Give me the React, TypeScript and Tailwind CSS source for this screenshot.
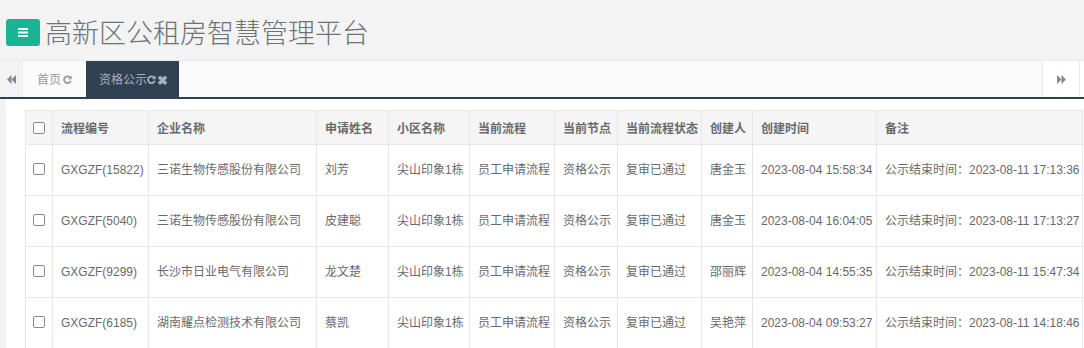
import React from "react";

const FONT = '"Liberation Sans", Arial, "Noto Sans CJK SC", sans-serif';

const rows = [
  ["GXGZF(15822)", "三诺生物传感股份有限公司", "刘芳", "尖山印象1栋", "员工申请流程", "资格公示", "复审已通过", "唐金玉", "2023-08-04 15:58:34", "公示结束时间：2023-08-11 17:13:36"],
  ["GXGZF(5040)", "三诺生物传感股份有限公司", "皮建聪", "尖山印象1栋", "员工申请流程", "资格公示", "复审已通过", "唐金玉", "2023-08-04 16:04:05", "公示结束时间：2023-08-11 17:13:27"],
  ["GXGZF(9299)", "长沙市日业电气有限公司", "龙文楚", "尖山印象1栋", "员工申请流程", "资格公示", "复审已通过", "邵丽辉", "2023-08-04 14:55:35", "公示结束时间：2023-08-11 15:47:34"],
  ["GXGZF(6185)", "湖南耀点检测技术有限公司", "蔡凯", "尖山印象1栋", "员工申请流程", "资格公示", "复审已通过", "吴艳萍", "2023-08-04 09:53:27", "公示结束时间：2023-08-11 14:18:46"],
];

const headers = ["流程编号", "企业名称", "申请姓名", "小区名称", "当前流程", "当前节点", "当前流程状态", "创建人", "创建时间", "备注"];
const widths = [27, 96, 168, 72, 81, 85, 63, 84, 51, 124, 206];

function Check() {
  return <div className="mx-auto h-[12px] w-[12px] rounded-[2px] border border-[#8a8a8a] bg-white" />;
}

function Refresh({ color }: { color: string }) {
  return (
    <svg width="9" height="9" viewBox="0 0 10 10" className="inline-block">
      <path d="M8.2 3.2 A3.8 3.8 0 1 0 8.6 6.4" fill="none" stroke={color} strokeWidth="2" />
      <path d="M9.6 0.6 L9.6 4.6 L5.6 4.6 Z" fill={color} />
    </svg>
  );
}

function Arrows({ dir }: { dir: "l" | "r" }) {
  return (
    <svg width="9" height="9" viewBox="0 0 9 9">
      {dir === "l" ? (
        <g fill="#7f8a99">
          <path d="M4.5 0 L0 4.5 L4.5 9 Z" />
          <path d="M9 0 L4.5 4.5 L9 9 Z" />
        </g>
      ) : (
        <g fill="#7f8a99">
          <path d="M0 0 L4.5 4.5 L0 9 Z" />
          <path d="M4.5 0 L9 4.5 L4.5 9 Z" />
        </g>
      )}
    </svg>
  );
}

export default function App() {
  return (
    <div className="h-[348px] w-[1084px] overflow-hidden bg-[#f3f3f4] text-[12px] text-[#676a6c]" style={{ fontFamily: FONT }}>
      {/* header */}
      <div className="flex h-[61px] items-center border-b border-[#e7eaec] bg-[#f3f3f4] pl-[6px]">
        <div className="mt-[4px] flex h-[27px] w-[34px] items-center justify-center rounded-[3px] bg-[#1ab394]">
          <svg width="10" height="9" viewBox="0 0 10 9">
            <rect x="0" y="0" width="10" height="2" fill="#fff" />
            <rect x="0" y="3.5" width="10" height="2" fill="#fff" />
            <rect x="0" y="7" width="10" height="2" fill="#fff" />
          </svg>
        </div>
        <div className="ml-[5px] mt-[3px] text-[27px] leading-none text-[#6f7274]" style={{ fontFamily: '"Noto Sans CJK SC", sans-serif', fontWeight: 300 }}>
          高新区公租房智慧管理平台
        </div>
      </div>
      {/* tab bar */}
      <div className="flex h-[38px] border-b-2 border-[#2f4050] bg-[#fafafa]">
        <div className="flex w-[23px] items-center justify-center bg-[#f3f3f4]">
          <Arrows dir="l" />
        </div>
        <div className="flex items-center gap-[2px] px-[14px] text-[#999]" style={{ fontFamily: '"Noto Sans CJK SC", sans-serif' }}>
          首页<Refresh color="#999" />
        </div>
        <div className="flex w-[93px] items-center bg-[#2f4050] pl-[13px] text-[#a7b1c2]" style={{ fontFamily: '"Noto Sans CJK SC", sans-serif' }}>
          资格公示<Refresh color="#a7b1c2" />
          <span className="ml-[1px] text-[13px] font-bold leading-none">✖</span>
        </div>
        <div className="flex-1" />
        <div className="flex w-[38px] items-center justify-center border-l border-r border-[#e7eaec] bg-white">
          <Arrows dir="r" />
        </div>
        <div className="w-[4px] bg-white" />
      </div>
      {/* content */}
      <div className="flex h-[250px] pl-[6px]">
        <div className="flex-1 bg-white pl-[19px] pt-[11px]">
          <table className="table-fixed border-collapse" style={{ width: 1057 }}>
            <colgroup>
              {widths.map((w, i) => (
                <col key={i} style={{ width: w }} />
              ))}
            </colgroup>
            <thead>
              <tr className="h-[34px] bg-[#f5f5f6]">
                <th className="border border-[#e7e7e7]">
                  <Check />
                </th>
                {headers.map((h) => (
                  <th key={h} className="whitespace-nowrap border border-[#e7e7e7] px-[8px] text-left font-bold text-[#676a6c]" style={{ fontFamily: '"Noto Sans CJK SC", sans-serif' }}>
                    {h}
                  </th>
                ))}
              </tr>
            </thead>
            <tbody>
              {rows.map((r, i) => (
                <tr key={i} className="h-[51px]">
                  <td className="border border-[#e7e7e7] pb-[2px]">
                    <Check />
                  </td>
                  {r.map((c, j) => (
                    <td key={j} className="whitespace-nowrap border border-[#e7e7e7] px-[8px] text-[#676a6c]">
                      {c}
                    </td>
                  ))}
                </tr>
              ))}
            </tbody>
          </table>
        </div>
      </div>
    </div>
  );
}
